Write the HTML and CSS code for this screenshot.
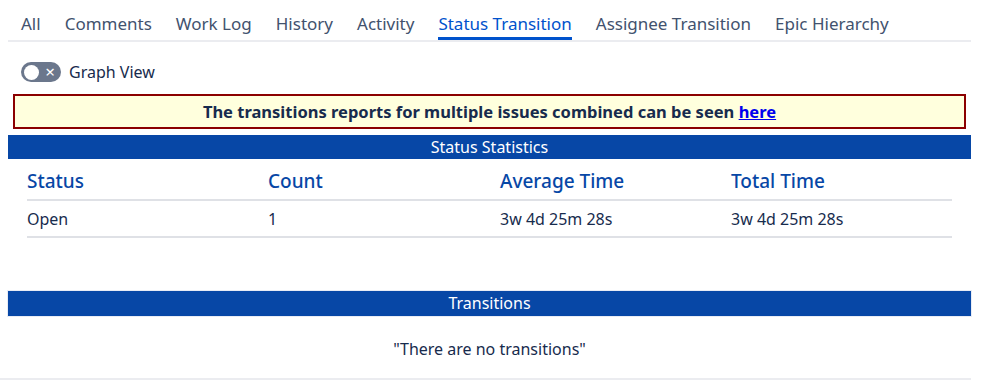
FILE: index.html
```html
<!DOCTYPE html>
<html lang="en">
<head>
  <meta charset="UTF-8">
  <meta name="viewport" content="width=device-width, initial-scale=1.0">
  <title>Status Transition</title>
  <link rel="stylesheet" href="styles.css">
</head>
<body>
  <div class="page">
    <!-- Pestañas del issue -->
    <ul class="tabs">
      <li class="tab">All</li>
      <li class="tab">Comments</li>
      <li class="tab">Work Log</li>
      <li class="tab">History</li>
      <li class="tab">Activity</li>
      <li class="tab active">Status Transition</li>
      <li class="tab">Assignee Transition</li>
      <li class="tab">Epic Hierarchy</li>
    </ul>

    <div class="graph-toggle">
      <span class="toggle"><span class="knob"></span><span class="cross">&times;</span></span>
      <span>Graph View</span>
    </div>

    <div class="notice">
      The transitions reports for multiple issues combined can be seen <a href="#">here</a>
    </div>

    <div class="bar">Status Statistics</div>
    <table class="stats">
      <thead>
        <tr>
          <th class="c1">Status</th>
          <th class="c2">Count</th>
          <th class="c3">Average Time</th>
          <th>Total Time</th>
        </tr>
      </thead>
      <tbody>
        <tr>
          <td>Open</td>
          <td>1</td>
          <td>3w 4d 25m 28s</td>
          <td>3w 4d 25m 28s</td>
        </tr>
      </tbody>
    </table>

    <div class="bar bar-transitions">Transitions</div>
    <p class="empty">"There are no transitions"</p>
  </div>
</body>
</html>
```

FILE: styles.css
```css
body {
  margin: 0;
  font-family: "Noto Sans", "Open Sans", sans-serif;
  color: #172b4d;
  background: #fff;
}

.page {
  width: 963px;
  padding-left: 8px;
  border-bottom: 2px solid #ebecf0;
}

.tabs {
  list-style: none;
  margin: 0;
  padding: 10px 0 0 1px;
  display: flex;
  border-bottom: 2px solid #ebecf0;
  height: 30px;
}

.tab {
  font-size: 17px;
  color: #42526e;
  margin: 0 12px;
  line-height: 28px;
  height: 30px;
  box-sizing: border-box;
}

.tab.active {
  color: #0052cc;
  border-bottom: 3px solid #0052cc;
}

.graph-toggle {
  display: flex;
  align-items: center;
  gap: 8px;
  margin: 20px 0 0 13px;
  font-size: 16px;
  height: 20px;
}

.toggle {
  width: 40px;
  height: 20px;
  border-radius: 10px;
  background: #6b778c;
  display: flex;
  align-items: center;
  justify-content: space-between;
  padding: 0 6px 0 3px;
  box-sizing: border-box;
}

.knob {
  width: 15px;
  height: 15px;
  border-radius: 50%;
  background: #fff;
}

.cross {
  color: #fff;
  font-size: 17px;
  line-height: 1;
  margin-top: -2px;
}

.notice {
  margin: 12px 5px 0 5px;
  border: 2px solid #8b0000;
  background: #ffffdd;
  text-align: center;
  font-weight: bold;
  font-size: 16.5px;
  height: 31px;
  line-height: 31px;
}

.notice a {
  color: #0000ee;
}

.bar {
  background: #0747a6;
  color: #fff;
  text-align: center;
  font-size: 16px;
  height: 24px;
  line-height: 24px;
  margin-top: 6px;
}

.stats {
  border-collapse: collapse;
  margin: 4px 19px 0 19px;
  width: 925px;
  font-size: 16px;
}

.stats th {
  text-align: left;
  color: #0747a6;
  font-weight: 500;
  font-size: 19px;
  line-height: 26px;
  padding: 5px 0 5px 0;
  border-bottom: 2px solid #dfe1e6;
}

.stats td {
  line-height: 22px;
  padding: 7px 0 6px 0;
  border-bottom: 2px solid #dfe1e6;
}

.c1 { width: 241px; }
.c2 { width: 232px; }
.c3 { width: 231px; }

.bar-transitions {
  margin-top: 53px;
  height: 25px;
  line-height: 25px;
  box-shadow: 0 0 0 1px #e8ecf5;
}

.empty {
  text-align: center;
  font-size: 16px;
  line-height: 22px;
  margin: 22px 0 0 0;
  padding-bottom: 18px;
}
```
